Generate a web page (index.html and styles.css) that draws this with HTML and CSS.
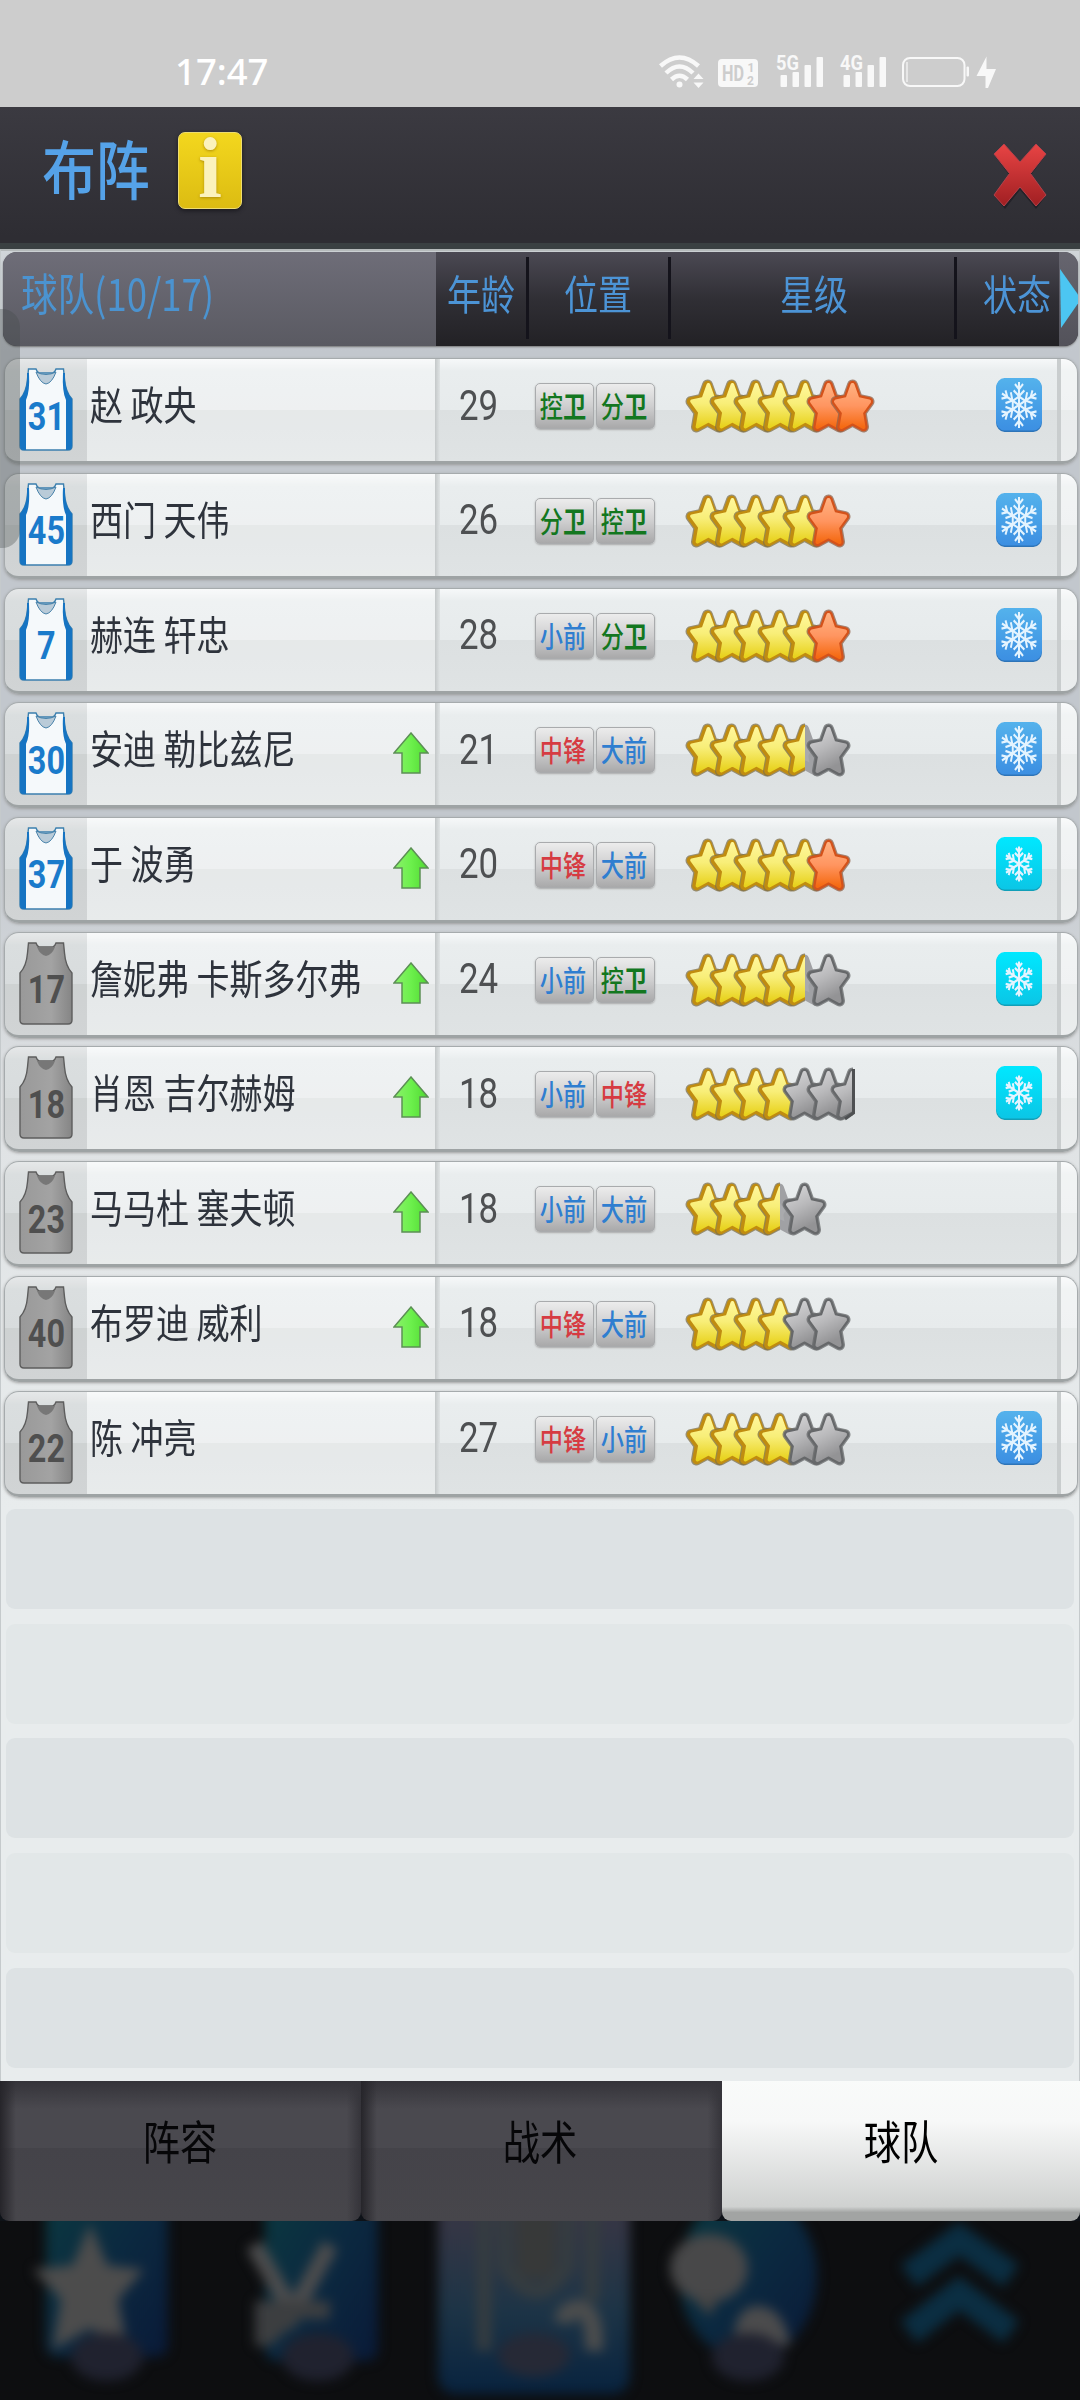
FILE: index.html
```html
<!DOCTYPE html>
<html lang="zh-CN">
<head>
<meta charset="utf-8">
<title>布阵</title>
<link rel="stylesheet" href="styles.css">
</head>
<body>
<svg class="defs" aria-hidden="true">
  <defs>
    <linearGradient id="gy" x1="0" y1="0" x2="0" y2="1"><stop offset="0" stop-color="#fff79a"/><stop offset=".45" stop-color="#f8ee78"/><stop offset="1" stop-color="#e8d21c"/></linearGradient>
    <linearGradient id="go" x1="0" y1="0" x2="0" y2="1"><stop offset="0" stop-color="#ffb080"/><stop offset=".5" stop-color="#ff9560"/><stop offset="1" stop-color="#f56a12"/></linearGradient>
    <linearGradient id="gg" x1="0" y1="0" x2=".4" y2="1"><stop offset="0" stop-color="#d6d6d8"/><stop offset=".5" stop-color="#b9b9bb"/><stop offset="1" stop-color="#939395"/></linearGradient>
    <linearGradient id="gs" x1="0" y1="0" x2="0" y2="1"><stop offset="0" stop-color="#54b2ec"/><stop offset="1" stop-color="#3c8fe2"/></linearGradient>
    <linearGradient id="gc" x1="0" y1="0" x2="0" y2="1"><stop offset="0" stop-color="#00e8ff"/><stop offset="1" stop-color="#0bc6e6"/></linearGradient>
    <linearGradient id="ga" x1="0" y1="0" x2="1" y2="0"><stop offset="0" stop-color="#8cf06c"/><stop offset=".5" stop-color="#6cf04c"/><stop offset="1" stop-color="#50d832"/></linearGradient>
    <linearGradient id="gx" x1="0" y1="0" x2="0" y2="1"><stop offset="0" stop-color="#e84444"/><stop offset="1" stop-color="#a01f22"/></linearGradient>
    <linearGradient id="gj" x1="0" y1="0" x2="1" y2="0"><stop offset="0" stop-color="#999"/><stop offset=".6" stop-color="#a3a3a3"/><stop offset="1" stop-color="#858585"/></linearGradient>
    <path id="st" d="M22.5 6L27.500 20L39 22.500L31 33.5L33.5 48L22.5 42L11.500 48L14 33.500L6 22.500L17.500 20Z"/>
    <clipPath id="lh"><rect x="0" y="0" width="23" height="55"/></clipPath>
    <g id="star-y"><use href="#st" fill="#7f704a" stroke="#7f704a" stroke-width="11" opacity=".75"/><use href="#st" stroke="#c08c10" stroke-width="8.500"/><use href="#st" fill="url(#gy)" stroke="url(#gy)" stroke-width="3.500" transform="translate(.9 -.3)"/></g>
    <g id="star-o"><use href="#st" stroke="#8f6048" stroke-width="11" opacity=".75"/><use href="#st" stroke="#d4521a" stroke-width="8.500"/><use href="#st" fill="url(#go)" stroke="url(#go)" stroke-width="4"/></g>
    <g id="star-g"><use href="#st" stroke="#66686a" stroke-width="11" opacity=".75"/><use href="#st" stroke="#66686a" stroke-width="8.500"/><use href="#st" fill="url(#gg)" stroke="url(#gg)" stroke-width="4"/></g>
    <g id="star-h"><use href="#st" fill="#a9aaad" stroke="#a0a1a4" stroke-width="9"/><use href="#star-y" clip-path="url(#lh)"/></g>
    <g id="star-c"><use href="#star-g" clip-path="url(#lh)"/><path d="M23.500 2V46L15 52" fill="none" stroke="#4e5052" stroke-width="3"/></g>
    <g id="arm"><path d="M0 0V-22M-4.500 -20L0 -15L4.500 -20M-6 -14L0 -8.500L6 -14"/></g>
    <g id="snow"><use href="#arm"/><use href="#arm" transform="rotate(60)"/><use href="#arm" transform="rotate(120)"/><use href="#arm" transform="rotate(180)"/><use href="#arm" transform="rotate(240)"/><use href="#arm" transform="rotate(300)"/></g>
    <path id="vest" d="M9.500 1H17Q18 4 20 5H34Q36 4 37 1H44.500L45.500 11Q46.500 24 53 31V78Q53 82 49 82H5Q1 82 1 78V31Q7.500 24 8.500 11Z"/>
  </defs>
</svg>
<div class="screen">
  <header class="status">
    <span class="time">17:47</span>
    <svg class="sicons" width="350" height="50" viewBox="650 45 350 50" fill="#f8f8f8">
      <g fill="none" stroke="#f8f8f8" stroke-width="4.500"><path d="M660.500 66Q679.500 49 698.500 66"/><path d="M666 73Q679.500 60 693 73"/><path d="M671.500 79.500Q679.500 72 687.500 79.500"/></g>
      <circle cx="679.500" cy="84.500" r="3"/><path d="M693.500 79L698.500 73.500L703.500 79ZM693.500 82.500H703.500L698.500 88Z"/>
      <rect x="718" y="59" width="40" height="28" rx="4"/>
      <g class="hd"><text x="722" y="81" font-size="22" textLength="22" lengthAdjust="spacingAndGlyphs">HD</text><text x="747.500" y="71.500" font-size="12">1</text><text x="747" y="84.500" font-size="12">2</text></g>
      <g class="net"><text x="776" y="70" font-size="21" textLength="23" lengthAdjust="spacingAndGlyphs">5G</text><text x="840" y="70" font-size="21" textLength="23" lengthAdjust="spacingAndGlyphs">4G</text></g>
      <g><rect x="780.500" y="75" width="6.500" height="12" rx="1"/><rect x="792.500" y="72" width="6.500" height="15" rx="1"/><rect x="804.500" y="65" width="6.500" height="22" rx="1"/><rect x="816.500" y="57" width="6.500" height="30" rx="1"/>
      <rect x="843.500" y="75" width="6.500" height="12" rx="1"/><rect x="855.500" y="72" width="6.500" height="15" rx="1"/><rect x="867.500" y="65" width="6.500" height="22" rx="1"/><rect x="879.500" y="57" width="6.500" height="30" rx="1"/></g>
      <rect x="903" y="58" width="61.500" height="28" rx="7" fill="none" stroke="#f8f8f8" stroke-width="2"/><path d="M907 62V82" stroke="#f8f8f8" stroke-width="1.200"/><rect x="966.500" y="66.500" width="2.500" height="10" rx="1"/>
      <path d="M986.500 56.500L976.500 76H985.500V88H988L996 69H986.500Z"/>
    </svg>
  </header>
  <div class="titlebar">
    <h1 class="sq">布阵</h1>
    <span class="info"><span>i</span></span>
    <svg class="close" width="56" height="68" viewBox="0 0 56 68"><path d="M13 2L28 21L43 2L53 12L38 32L53 53L44 65L28 46L13 65L3 53L18 32L3 12Z" fill="#16141a" opacity=".5" transform="translate(0 2)"/><path d="M12 2L28 20L44 2L54 12L38.500 31.500L54 53L44 64L28 45L12 64L2 53L17.500 31.500L2 12Z" fill="url(#gx)" stroke="#b5404a" stroke-width="1"/></svg>
  </div>
  <main class="panel">
    <div class="thead">
      <div class="c-title"><span class="sq l">球队(10/17)</span></div>
      <div><span class="sq">年龄</span></div>
      <div class="bar"><span class="sq">位置</span></div>
      <div class="bar"><span class="sq">星级</span></div>
      <div class="bar"><span class="sq">状态</span></div>
      <div class="c-next"><svg width="20" height="62" viewBox="0 0 20 62"><path d="M1 1L20 28V34L2 60Z" fill="#4cc6f2"/></svg></div>
    </div>
    <div class="rows" id="rows"></div>
    <div class="side-handle"></div>
  </main>
  <nav class="tabs"><a><span class="sq">阵容</span></a><a><span class="sq">战术</span></a><a class="on"><span class="sq">球队</span></a></nav>
  <footer class="dock">
    <svg width="1080" height="180" viewBox="0 2220 1080 180">
      <defs>
        <filter id="bl" x="-10%" y="-10%" width="120%" height="120%" color-interpolation-filters="sRGB"><feGaussianBlur stdDeviation="6"/></filter>
        <linearGradient id="d1" x1="0" y1="0" x2="1" y2="1"><stop offset="0" stop-color="#0b3a40"/><stop offset=".5" stop-color="#0b2940"/><stop offset="1" stop-color="#0a1a38"/></linearGradient>
        <linearGradient id="d2" x1="0" y1="0" x2="0" y2="1"><stop offset="0" stop-color="#353645"/><stop offset=".2" stop-color="#353645"/><stop offset=".6" stop-color="#1d3446"/><stop offset="1" stop-color="#08233f"/></linearGradient>
      </defs>
      <g filter="url(#bl)">
        <rect x="46" y="2180" width="122" height="176" rx="12" fill="url(#d1)"/>
        <path d="M90 2228L106 2266L140 2270L116 2298L125 2345L90 2325L55 2345L63 2298L37 2270L74 2266Z" fill="#4c4c4c" stroke="#4c4c4c" stroke-width="4"/>
        <rect x="265" y="2180" width="113" height="180" rx="12" fill="url(#d1)"/>
        <path d="M254 2244L293 2312L330 2244" fill="none" stroke="#4c4c4d" stroke-width="17"/><path d="M255 2300H330V2318H300L270 2345H255Z" fill="#3c3e40"/>
        <rect x="438" y="2180" width="192" height="213" rx="18" fill="url(#d2)"/>
        <path d="M484 2200V2350M592 2200V2300M505 2200V2265Q536 2315 567 2265V2200" fill="none" stroke="#353c40" stroke-width="15"/>
        <rect x="516" y="2200" width="40" height="78" rx="16" fill="#373939"/>
        <path d="M563 2322Q565 2308 580 2308Q596 2312 594 2350" fill="none" stroke="#4c4d4d" stroke-width="18"/>
        <ellipse cx="748" cy="2275" rx="69" ry="84" fill="url(#d1)"/>
        <ellipse cx="709" cy="2267" rx="39" ry="34" fill="#484849"/><path d="M690 2295L710 2315L720 2295Z" fill="#444"/>
        <path d="M733 2340Q736 2305 757 2305Q784 2305 790 2345Z" fill="#4b4b4c"/>
        <path d="M909 2275L959 2238L1011 2275M909 2331L959 2292L1011 2331" fill="none" stroke="#0b2e42" stroke-width="27"/>
        <g fill="#20222f"><ellipse cx="107" cy="2356" rx="36" ry="24"/><ellipse cx="318" cy="2356" rx="36" ry="24"/><ellipse cx="534" cy="2354" rx="36" ry="22" fill="#262936"/><ellipse cx="748" cy="2356" rx="36" ry="24"/></g>
      </g>
    </svg>
  </footer>
</div>
<script src="script.js"></script>
</body>
</html>
```

FILE: styles.css
```css
* { box-sizing: border-box; }
body { margin: 0; font-family: Roboto, "Noto Sans CJK SC", sans-serif; }
.defs { position: absolute; width: 0; height: 0; }
#st { stroke-linejoin: round; }
.screen { width: 1080px; height: 2400px; display: flex; flex-direction: column; overflow: hidden; background: #0d0e10; }
.sq { display: inline-block; transform: scaleX(.83); white-space: nowrap; }
.sq.l { transform-origin: left; }

.status { height: 107px; flex: none; background: #cdcdcd; display: flex; align-items: flex-start; padding: 45px 80px 0 175px; justify-content: space-between; }
.time { font: 500 36.5px/53px "Noto Sans", sans-serif; color: #fff; }
.sicons { font-family: Roboto, sans-serif; font-weight: 700; }
.hd { fill: #cdcdcd; }

.titlebar { height: 142px; flex: none; display: flex; align-items: flex-start; padding: 25px 32px 0 37px; background: linear-gradient(#3b3a41, #2e2d33 95%); border-bottom: 6px solid #3a4042; }
.titlebar h1 { margin: 2px 14px 0 -5px; font-size: 64px; line-height: 78px; font-weight: 500; color: #55a2e8; width: 128px; transform: scaleX(.84); }
.info { width: 64px; height: 77px; margin-left: 4px; border-radius: 7px; background: linear-gradient(#f3d71e, #dcbc12); border: 1px solid #eedd70; display: flex; justify-content: center; align-items: center; box-shadow: 0 2px 4px #1b1a20; }
.info span { font: 700 86px/70px "Liberation Serif", serif; color: #fbf2bc; text-shadow: 0 1px 3px #b08d08; transform: translateY(-3px); }
.close { margin: 10px 0 0 auto; }

.panel { position: relative; height: 1831.7px; flex: none; border-top: 2px solid #b5babb; padding: 1px 1px 0 2px; background: linear-gradient(#d0d5d9 0, #c2c7cd 100px, #c2c7cd 580px, #dfe2e4 850px, #e8eced 1260px); border-left: 1px solid #c5cacc; border-right: 1px solid #c5cacc; }
.thead { display: grid; grid-template-columns: 432.6px 90px 142px 286.500px 104.500px 1fr; height: 93.500px; border-radius: 14px; overflow: hidden; background: linear-gradient(#4b4953, #302f35 50%, #222125); color: #4c94d6; font-size: 41px; box-shadow: 0 1px 2px #777; }
.thead > div { display: flex; align-items: center; justify-content: center; padding-bottom: 13px; position: relative; }
.thead > .c-title { background: linear-gradient(#6e6d78, #5a5a62); font-size: 44px; font-family: "Noto Sans CJK SC", sans-serif; justify-content: flex-start; padding-left: 18px; color: #4b93d0; }
.thead > .bar::before { content: ""; position: absolute; left: 0; top: 5px; width: 3px; height: 82px; background: #14131b; }
.thead > .bar:nth-child(3) { padding-left: 3px; }
.thead > .bar:nth-child(4) { padding-left: 6px; }
.thead > .bar:nth-child(5) { padding-left: 22px; }
.thead > .c-next { background: linear-gradient(#66656f, #53525a); justify-content: flex-start; padding-bottom: 0; }

.rows { display: grid; grid-template-rows: repeat(15, 114.72px); margin-top: 12.600px; }
.row { height: 106px; margin-left: 1px; display: grid; grid-template-columns: 82px 347.600px 5px 86px 144px 284.500px 105px 1fr; border-radius: 15px; overflow: hidden; border: 1.500px solid #a6abad; border-bottom: 3px solid #9ea3a4; background: linear-gradient(#f6f8f9, #e9edee 12%, #e7ebec 50%, #dce0e1 50.100%, #dfe3e4); box-shadow: 0 1px 3px #999e; }
.row > div { display: flex; align-items: center; padding-bottom: 10px; }
.row .shirt { background: #00000010; padding: 0 0 1px 14px; }
.vest { display: grid; width: 54px; height: 83px; place-items: center; }
.vest > * { grid-area: 1 / 1; }
.vest b { font-size: 39px; line-height: 40px; color: #1a7bcb; transform: translateY(7px) scaleX(.83); }
.vest.off b { color: #4f4f4f; }
.row .name { background: #ffffff48; color: #2e333c; font-size: 40px; padding: 0 0 14px 3px; justify-content: space-between; font-family: "Noto Sans CJK SC", sans-serif; }
.row .name svg { flex: none; margin: 12px 6px 0 0; }
.name .sq { width: 290px; margin-right: -30px; }
.name .sq.l { transform: scaleX(.825); }
.row .sep { background: linear-gradient(90deg, #c4c8c9, #dfe3e4); }
.row .age { font-size: 42px; color: #4e5052; justify-content: center; padding-right: 8px; }
.row .pos { gap: 2px; padding-left: 9.500px; padding-bottom: 8px; }
.tag { width: 59px; height: 46px; border: 1.500px solid #a9abad; border-radius: 5px; background: linear-gradient(#ececec, #cfcfd0 50%, #a9a9aa); display: grid; place-items: center; font: 500 29px/34px "Noto Sans CJK SC", sans-serif; box-shadow: 0 1px 2px #aaa; }
.tag .sq { transform: translate(-2px, -1px) scaleX(.8); }
.g { color: #13771f; } .b { color: #2f7ed0; } .r { color: #d63b42; }
.row .stars { padding-left: 15.500px; padding-bottom: 7px; }
.stars svg { flex: none; margin-right: -20.900px; overflow: visible; }
.row .cond { padding-left: 41.500px; padding-bottom: 10px; }
.row .edge { background: #ffffff60; border-left: 4px solid #c9cdce; margin-left: -2px; }
.slot { height: 100px; margin: 3.700px 4px 0 3px; border-radius: 9px; background: #dde2e4; }
.slot.alt { background: #e2e7e8; }
.side-handle { position: absolute; left: -1px; top: 58px; width: 20px; height: 239px; border-radius: 0 18px 18px 0; background: #464c4c55; }

.tabs { height: 140px; flex: none; display: grid; grid-template-columns: 361px 360.500px 1fr; background: #0e1218; }
.tabs a { display: flex; align-items: center; justify-content: center; padding: 0 2px 23px 0; font-size: 46px; color: #060608; font-family: "Noto Sans CJK SC", sans-serif; border-radius: 0 0 9px 9px; background: linear-gradient(90deg, #26252a, #26252a00 16px, #26252a00 96%, #35343a), linear-gradient(#343339, #4a494f 20%, #4a494f 48%, #444349 48%, #47464b); }
.tabs .sq { transform: scaleX(.81); }
.tabs a.on { margin-top: -3px; padding: 0 0 20px; background: linear-gradient(#f9fbfa, #f7f8f8 30%, #cfd1d0 90%, #a2a4a3 94%, #a2a4a3); color: #000; }
.dock { height: 180px; flex: none; background: #0d0e10; }
.dock svg { display: block; }
```

FILE: script.js
```js
const players = [
  [31, '赵 政央', 0, 29, '控卫 分卫', 'yyyyyoo', 1],
  [45, '西门 天伟', 0, 26, '分卫 控卫', 'yyyyyo', 1],
  [7, '赫连 轩忠', 0, 28, '小前 分卫', 'yyyyyo', 1],
  [30, '安迪 勒比兹尼', 1, 21, '中锋 大前', 'yyyyhg', 1],
  [37, '于 波勇', 1, 20, '中锋 大前', 'yyyyyo', 2],
  [17, '詹妮弗 卡斯多尔弗', 1, 24, '小前 控卫', 'yyyyhg', 2],
  [18, '肖恩 吉尔赫姆', 1, 18, '小前 中锋', 'yyyyggc', 2],
  [23, '马马杜 塞夫顿', 1, 18, '小前 大前', 'yyyhg', 0],
  [40, '布罗迪 威利', 1, 18, '中锋 大前', 'yyyygg', 0],
  [22, '陈 冲亮', 0, 27, '中锋 小前', 'yyyygg', 1]
];

const vest = on => on
  ? `<svg width="54" height="83" viewBox="0 0 54 83"><use href="#vest" fill="#f5f9fb" stroke="#3b7fae" stroke-width="1.4"/><path d="M1 31Q7 24 8 13V5L10 5Q11 24 7 32V82H5Q1 82 1 78ZM53 31Q47 24 46 13V5L44 5Q43 24 47 32V82H49Q53 82 53 78Z" fill="#1674c2"/><path d="M17 4Q27 9 37 4Q33 15 27 16Q21 15 17 4Z" fill="#b9cbd8" stroke="#4782aa" stroke-width="1"/></svg>`
  : `<svg width="54" height="83" viewBox="0 0 54 83"><use href="#vest" fill="url(#gj)" stroke="#5d5d5d" stroke-width="1.4"/><path d="M18 5H36Q33 13 27 14Q21 13 18 5Z" fill="#777"/></svg>`;

const arrow = '<svg width="36" height="42" viewBox="0 0 36 42"><path d="M18 1L35 21H27V41H9V21H1Z" fill="url(#ga)" stroke="#5c8f55" stroke-width="1.5"/></svg>';

const tag = t => {
  const cls = t.includes('卫') ? 'g' : t.includes('前') ? 'b' : 'r';
  return `<span class="tag ${cls}"><span class="sq">${t.replace('卫', '<b>卫</b>')}</span></span>`;
};

const cond = c => !c ? '' : `<svg width="46" height="54" viewBox="0 0 54 54" preserveAspectRatio="none"><rect y="1" width="54" height="53" rx="10" fill="${c === 1 ? '#2d74b8' : '#119fb8'}"/><rect width="54" height="52.500" rx="10" fill="url(#${c === 1 ? 'gs' : 'gc'})"/><g transform="translate(27 27) scale(${c === 1 ? 1.05 : 0.8})" fill="none" stroke="#e4f4ff" stroke-width="${c === 1 ? 2.2 : 3}"><use href="#snow"/>${c === 1 ? '<path d="M0 -8L7 -4V4L0 8L-7 4V-4Z"/>' : ''}</g></svg>`;

const rows = players.map(([no, name, up, age, pos, stars, c], i) => `<div><div class="row">
  <div class="shirt"><span class="vest ${i > 4 ? 'off' : ''}">${vest(i < 5)}<b>${no}</b></span></div>
  <div class="name"><span class="sq l">${name}</span>${up ? arrow : ''}</div>
  <div class="sep"></div>
  <div class="age"><span class="sq">${age}</span></div>
  <div class="pos">${pos.split(' ').map(tag).join('')}</div>
  <div class="stars">${[...stars].map(s => `<svg width="45" height="55" viewBox="0 0 45 55"><use href="#star-${s}"/></svg>`).join('')}</div>
  <div class="cond">${cond(c)}</div>
  <div class="edge"></div>
</div></div>`);
for (let i = 0; i < 5; i++) rows.push(`<div class="slot ${i % 2 ? 'alt' : ''}"></div>`);
document.getElementById('rows').innerHTML = rows.join('');
```
